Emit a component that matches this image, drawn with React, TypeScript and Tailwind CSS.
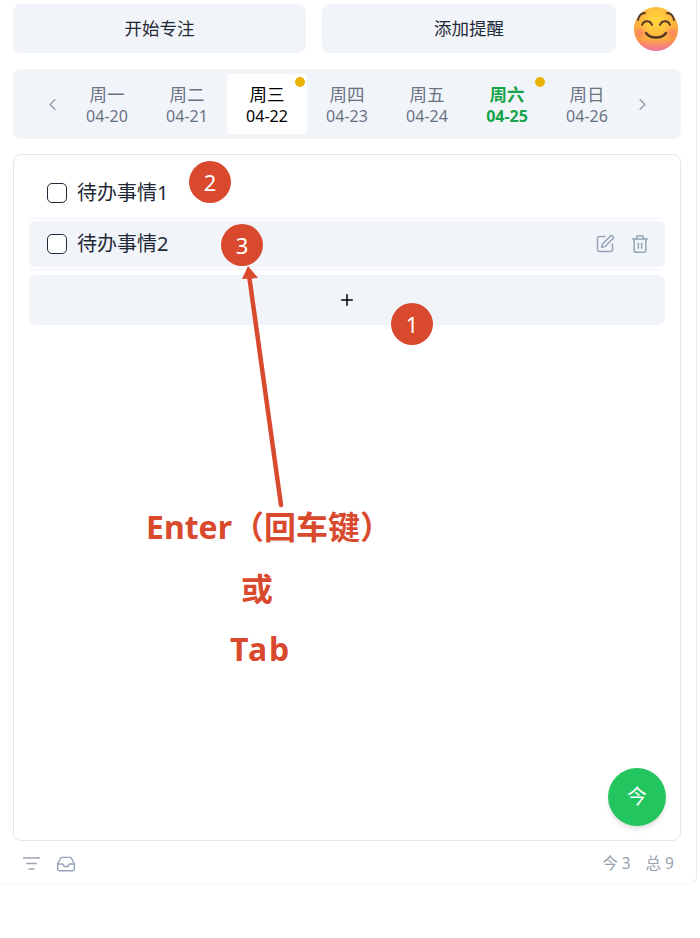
import React from 'react';
import { ChevronLeft, ChevronRight, Inbox, ListFilter, Plus, SquarePen, Trash2 } from 'lucide-react';

const DAYS = [
  { name: '周一', date: '04-20' },
  { name: '周二', date: '04-21' },
  { name: '周三', date: '04-22', selected: true, dot: true },
  { name: '周四', date: '04-23' },
  { name: '周五', date: '04-24' },
  { name: '周六', date: '04-25', today: true, dot: true },
  { name: '周日', date: '04-26' },
];

const SmileEmoji: React.FC = () => (
  <svg width="48" height="46" viewBox="0 0 48 46" className="shrink-0">
    <defs>
      <radialGradient id="face" cx="50%" cy="30%" r="72%">
        <stop offset="0%" stopColor="#ffd83f" />
        <stop offset="60%" stopColor="#fdb23c" />
        <stop offset="100%" stopColor="#f98a3e" />
      </radialGradient>
      <radialGradient id="cheek" cx="50%" cy="50%" r="50%">
        <stop offset="0%" stopColor="#fb6f7e" stopOpacity="0.7" />
        <stop offset="100%" stopColor="#fb6f7e" stopOpacity="0" />
      </radialGradient>
      <linearGradient id="chin" x1="0" y1="0" x2="0" y2="1">
        <stop offset="72%" stopColor="#f472b6" stopOpacity="0" />
        <stop offset="100%" stopColor="#f472b6" stopOpacity="0.85" />
      </linearGradient>
    </defs>
    <circle cx="24" cy="23" r="22" fill="url(#face)" />
    <circle cx="24" cy="23" r="22" fill="url(#chin)" />
    <ellipse cx="8" cy="27" rx="7" ry="7" fill="url(#cheek)" />
    <ellipse cx="40" cy="27" rx="7" ry="7" fill="url(#cheek)" />
    <g fill="none" stroke="#54382e" strokeWidth="1.9" strokeLinecap="round">
      <path d="M6 14 C7 9 10 7 13 7" />
      <path d="M42 14 C41 9 38 7 35 7" />
      <path d="M10 19 C12 14 18 14 20 19" />
      <path d="M28 19 C30 14 36 14 38 19" />
      <path d="M14 27 C18 33 30 33 34 27" strokeWidth="2.4" />
    </g>
  </svg>
);

const Badge: React.FC<{ n: number; className: string }> = ({ n, className }) => (
  <div className={`absolute flex h-[42px] w-[42px] items-center justify-center rounded-full bg-[#d9492e] text-[22px] text-white ${className}`}>
    {n}
  </div>
);

const Check: React.FC = () => <span className="h-5 w-5 shrink-0 rounded-[5px] border border-[#1f2937] bg-white" />;

export default function App() {
  return (
    <div className="relative h-[938px] w-[700px] overflow-hidden bg-white font-['Noto_Sans','Noto_Sans_CJK_SC',sans-serif] text-[#1f2937]">
      <div className="flex h-[885px] w-[697px] flex-col rounded-br-lg border-r border-b border-r-[#e8eaee] border-b-[#f7f8fa] pt-1 pr-[15px] pl-[13px]">
        <div className="flex h-[49px] items-center">
          <button className="h-full w-[293px] rounded-lg bg-slate-100 text-[17.5px]">开始专注</button>
          <button className="ml-4 h-full w-[294px] rounded-lg bg-slate-100 text-[17.5px]">添加提醒</button>
          <div className="ml-4"><SmileEmoji /></div>
        </div>

        <div className="mt-4 flex h-[70px] items-center rounded-lg bg-slate-100 pl-[30px]">
          <ChevronLeft size={19} strokeWidth={2} className="mr-[5px] text-gray-400" />
          {DAYS.map((d) => (
            <div
              key={d.date}
              className={`relative flex h-[60px] w-20 flex-col items-center justify-center rounded ${d.selected ? 'bg-white text-black' : d.today ? 'text-[#16a34a]' : 'text-gray-500'}`}
            >
              <span className={`text-[17.5px] leading-[24px] ${d.today ? 'font-bold' : ''}`}>{d.name}</span>
              <span className={`text-[16px] leading-[20px] ${d.today ? 'font-bold' : ''}`}>{d.date}</span>
              {d.dot && <span className="absolute top-[3px] right-[2px] h-[10px] w-[10px] rounded-full bg-[#eab308]" />}
            </div>
          ))}
          <ChevronRight size={19} strokeWidth={2} className="ml-[6px] text-gray-400" />
        </div>

        <div className="relative mt-[15px] h-[687px] rounded-lg border border-[#e5e7eb] bg-white px-[15px] pt-[13px]">
          <div className="flex h-[51px] items-center gap-[10px] border-b border-slate-100 pl-[18px] text-[20px]">
            <Check />
            <span>待办事情1</span>
          </div>
          <div className="border-b border-slate-100 pt-[2px] pb-[2px]">
            <div className="flex h-[46px] items-center gap-[10px] rounded-md bg-slate-100 pr-[15px] pl-[18px] text-[20px]">
              <Check />
              <span className="flex-1">待办事情2</span>
              <SquarePen size={20} strokeWidth={1.8} className="text-[#94a3b8]" />
              <Trash2 size={20} strokeWidth={1.8} className="ml-[5px] text-[#94a3b8]" />
            </div>
          </div>
          <button className="mt-[5px] flex h-[50px] w-full items-center justify-center rounded-md bg-slate-100 text-black">
            <Plus size={18} strokeWidth={2} />
          </button>

          <button className="absolute right-[14px] bottom-[14px] flex h-[58px] w-[58px] items-center justify-center rounded-full bg-[#22c55e] text-[20px] text-white shadow-md">
            今
          </button>
        </div>

        <div className="flex flex-1 items-center pt-[2px] pr-[7px] pl-[9px] text-[15.5px] text-gray-400">
          <ListFilter size={19} strokeWidth={1.7} className="text-[#9ca3af]" />
          <Inbox size={20} strokeWidth={1.7} className="ml-[15px] text-[#94a3b8]" />
          <span className="ml-auto">今 3</span>
          <span className="ml-[15px]">总 9</span>
        </div>
      </div>

      <svg className="pointer-events-none absolute top-0 left-0" width="700" height="938">
        <line x1="281" y1="505" x2="249" y2="275" stroke="#d9492e" strokeWidth="4.5" strokeLinecap="round" />
        <polygon points="248,266 242,279 258,278" fill="#d9492e" />
      </svg>
      <Badge n={2} className="top-[161px] left-[189px]" />
      <Badge n={3} className="top-[224px] left-[221px]" />
      <Badge n={1} className="top-[303px] left-[391px]" />

      <div className="absolute top-[504px] left-[146px] text-[32px] leading-[46px] font-bold whitespace-nowrap text-[#d9492e]">Enter（回车键）</div>
      <div className="absolute top-[566px] left-[241px] text-[32px] leading-[46px] font-bold text-[#d9492e]">或</div>
      <div className="absolute top-[626px] left-[230px] text-[32px] leading-[46px] font-bold tracking-[2px] text-[#d9492e]">Tab</div>
    </div>
  );
}
